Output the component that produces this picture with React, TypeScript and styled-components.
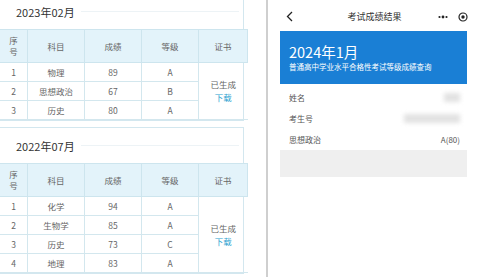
import React from 'react';
import styled, { createGlobalStyle } from 'styled-components';

type Score = { subject: string; score: number; grade: string };

type Exam = { title: string; scores: Score[] };

const exams: Exam[] = [
  {
    title: '2023年02月',
    scores: [
      { subject: '物理', score: 89, grade: 'A' },
      { subject: '思想政治', score: 67, grade: 'B' },
      { subject: '历史', score: 80, grade: 'A' },
    ],
  },
  {
    title: '2022年07月',
    scores: [
      { subject: '化学', score: 94, grade: 'A' },
      { subject: '生物学', score: 85, grade: 'A' },
      { subject: '历史', score: 73, grade: 'C' },
      { subject: '地理', score: 83, grade: 'A' },
    ],
  },
];

const GlobalStyle = createGlobalStyle`
  html, body {
    margin: 0;
    padding: 0;
    background: #fff;
    overflow: hidden;
  }
  body {
    font-family: 'Noto Sans CJK SC', 'Noto Sans', sans-serif;
  }
`;

const Page = styled.div`
  display: flex;
  width: 480px;
  height: 277px;
  overflow: hidden;
`;

const LeftPane = styled.div`
  width: 266px;
  flex-shrink: 0;
  display: flex;
  flex-direction: column;
  gap: 6px;
  margin-top: -7px;
`;

const Divider = styled.div`
  width: 2px;
  flex-shrink: 0;
  background: #cfcfcf;
`;

const Card = styled.div`
  width: 243px;
  border: 1px solid #d3e7ef;
  border-left: none;
  background: #fff;
`;

const CardHead = styled.div`
  height: 35px;
  display: flex;
  align-items: center;
  gap: 6px;
  padding: 0 4px 0 16px;
  font-size: 11px;
  color: #333;

  &::after {
    content: '';
    flex: 1;
    height: 1px;
    background: #edf3f6;
  }
`;

const Table = styled.table`
  width: 100%;
  border-collapse: collapse;
  table-layout: fixed;
  font-size: 8.5px;
  color: #666;
`;

const Th = styled.th<{ $w: number }>`
  width: ${(p) => p.$w}px;
  height: 32px;
  background: #e3f3fa;
  border: 1px solid #cde5ee;
  font-weight: normal;
  line-height: 11px;
  padding: 0;
  &:first-child {
    border-left: none;
  }
`;

const Row = styled.tr`
  height: 19px;
`;

const Td = styled.td`
  border: 1px solid #d3e7ee;
  text-align: center;
  padding: 0;
  line-height: 10px;
  &:first-child {
    border-left: none;
  }
`;

const CertCell = styled(Td)`
  line-height: 13px;
  border-right: none;
`;

const Download = styled.span`
  color: #2b9fd0;
`;

const RightPane = styled.div`
  flex: 1;
  display: flex;
  flex-direction: column;
  background: #fff;
`;

const NavBar = styled.div`
  height: 31px;
  display: flex;
  align-items: center;
  padding: 2px 12px 0 18px;
  box-sizing: border-box;
`;

const NavTitle = styled.div`
  flex: 1;
  text-align: center;
  font-size: 9px;
  color: #333;
  padding-left: 18px;
`;

const NavActions = styled.div`
  display: flex;
  align-items: center;
  gap: 10px;
`;

const Banner = styled.div`
  margin: 0 13px 0 12px;
  height: 53px;
  background: #1a7fd5;
  color: #fff;
  padding: 12px 9px 0;
  box-sizing: border-box;
`;

const BannerTitle = styled.div`
  font-size: 14.5px;
  line-height: 17px;
`;

const BannerSub = styled.div`
  font-size: 7.5px;
  line-height: 12px;
  margin-top: 1px;
`;

const InfoList = styled.div`
  margin: 3px 13px 0 12px;
`;

const InfoRow = styled.div`
  height: 21px;
  display: flex;
  align-items: center;
  justify-content: space-between;
  padding: 0 7px 0 9px;
  font-size: 8px;
  color: #555;
`;

const Blur = styled.div<{ $w: number }>`
  width: ${(p) => p.$w}px;
  height: 9px;
  background: #e2e2e2;
  filter: blur(2px);
`;

const GrayBlock = styled.div`
  margin: 0 13px 0 12px;
  height: 27px;
  background: #efefef;
`;

const ScoreCard = ({ exam }: { exam: Exam }) => (
  <Card>
    <CardHead>{exam.title}</CardHead>
    <Table>
      <thead>
        <tr>
          <Th $w={27}>
            序<br />号
          </Th>
          <Th $w={56}>科目</Th>
          <Th $w={56}>成绩</Th>
          <Th $w={56}>等级</Th>
          <Th $w={48}>证书</Th>
        </tr>
      </thead>
      <tbody>
        {exam.scores.map((s, i) => (
          <Row key={i}>
            <Td>{i + 1}</Td>
            <Td>{s.subject}</Td>
            <Td>{s.score}</Td>
            <Td>{s.grade}</Td>
            {i === 0 && (
              <CertCell rowSpan={exam.scores.length}>
                已生成
                <br />
                <Download>下载</Download>
              </CertCell>
            )}
          </Row>
        ))}
      </tbody>
    </Table>
  </Card>
);

const App = () => (
  <>
    <GlobalStyle />
    <Page>
      <LeftPane>
        {exams.map((e) => (
          <ScoreCard key={e.title} exam={e} />
        ))}
      </LeftPane>
      <Divider />
      <RightPane>
        <NavBar>
          <svg width="7" height="11" viewBox="0 0 7 11">
            <path d="M6 1 L1.5 5.5 L6 10" fill="none" stroke="#222" strokeWidth="1.3" />
          </svg>
          <NavTitle>考试成绩结果</NavTitle>
          <NavActions>
            <svg width="10" height="4" viewBox="0 0 10 4">
              <circle cx="1.5" cy="2" r="1.1" fill="#222" />
              <circle cx="5" cy="2" r="1.4" fill="#222" />
              <circle cx="8.5" cy="2" r="1.1" fill="#222" />
            </svg>
            <svg width="10" height="10" viewBox="0 0 10 10">
              <circle cx="5" cy="5" r="4" fill="none" stroke="#222" strokeWidth="1.2" />
              <circle cx="5" cy="5" r="1.7" fill="#222" />
            </svg>
          </NavActions>
        </NavBar>
        <Banner>
          <BannerTitle>2024年1月</BannerTitle>
          <BannerSub>普通高中学业水平合格性考试等级成绩查询</BannerSub>
        </Banner>
        <InfoList>
          <InfoRow>
            <span>姓名</span>
            <Blur $w={16} />
          </InfoRow>
          <InfoRow>
            <span>考生号</span>
            <Blur $w={56} />
          </InfoRow>
          <InfoRow>
            <span>思想政治</span>
            <span>A(80)</span>
          </InfoRow>
        </InfoList>
        <GrayBlock />
      </RightPane>
    </Page>
  </>
);

export default App;
